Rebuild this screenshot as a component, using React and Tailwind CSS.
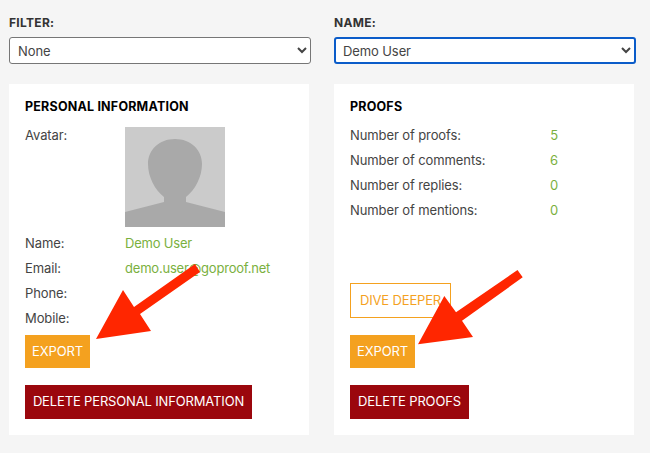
export default function App() {
  return (
    <div className="relative h-[453px] w-[650px] overflow-hidden bg-[#f5f5f5] font-['Inter','Liberation_Sans',sans-serif] text-[13px] tracking-[-0.1px] text-[#444444]">
      <div className="grid grid-cols-[300px_300px] gap-x-[25px] pl-[9px] pt-[15px]">
        <div className="flex flex-col">
          <label className="h-[22px] text-[12px] font-bold leading-[16px] tracking-[0.3px] text-[#333333]">FILTER:</label>
          <select defaultValue="None" className="h-[27px] w-[302px] rounded-[3px] border border-[#767676] bg-white pl-[4px] text-[13px] tracking-[-0.1px] text-[#444444]">
            <option>None</option>
          </select>
        </div>
        <div className="flex flex-col">
          <label className="h-[22px] text-[12px] font-bold leading-[16px] tracking-[0.3px] text-[#333333]">NAME:</label>
          <select defaultValue="Demo User" className="h-[27px] w-[302px] rounded-[3px] border-2 border-[#0b5cc9] bg-white pl-[3px] text-[13px] tracking-[-0.1px] text-[#444444] outline-none">
            <option>Demo User</option>
          </select>
        </div>

        <section className="mt-[20px] flex h-[351px] flex-col bg-white pl-4 pt-[15px]">
          <h2 className="h-[28px] text-[12.5px] font-bold leading-[16px] tracking-[0.2px] text-black">PERSONAL INFORMATION</h2>
          <div className="flex h-[100px]">
            <span className="w-[100px] leading-[16px]">Avatar:</span>
            <svg width="100" height="100" viewBox="0 0 100 100" className="block">
              <rect width="100" height="100" fill="#cbcbcb" />
              <path fill="#a9a9a9" d="M50 12C34 12 23 23 23 37C23 50 30 63 39 70V75L0 85V100H100V85L61 75V70C70 63 77 50 77 37C77 23 66 12 50 12Z" />
            </svg>
          </div>
          <div className="mt-[4px] flex flex-col">
            <div className="flex h-[25px] items-center"><span className="w-[100px]">Name:</span><span className="tracking-[-0.2px] text-[#7ab03e]">Demo User</span></div>
            <div className="flex h-[25px] items-center"><span className="w-[100px]">Email:</span><span className="tracking-[-0.2px] text-[#7ab03e]">demo.user@goproof.net</span></div>
            <div className="flex h-[25px] items-center"><span className="w-[100px]">Phone:</span></div>
            <div className="flex h-[25px] items-center"><span className="w-[100px]">Mobile:</span></div>
          </div>
          <button className="mt-[4px] h-[33px] w-[65px] bg-[#f4a11f] text-center text-[13px] tracking-[-0.15px] text-white">EXPORT</button>
          <button className="mt-[17px] h-[34px] w-[227px] bg-[#9b070d] text-center text-[13px] tracking-[-0.15px] text-white">DELETE PERSONAL INFORMATION</button>
        </section>

        <section className="mt-[20px] flex h-[351px] flex-col bg-white pl-4 pt-[15px]">
          <h2 className="h-[24px] text-[12.5px] font-bold leading-[16px] tracking-[0.2px] text-black">PROOFS</h2>
          <div className="flex h-[25px] items-center"><span className="w-[200px]">Number of proofs:</span><span className="w-[8px] text-right text-[#7ab03e]">5</span></div>
          <div className="flex h-[25px] items-center"><span className="w-[200px]">Number of comments:</span><span className="w-[8px] text-right text-[#7ab03e]">6</span></div>
          <div className="flex h-[25px] items-center"><span className="w-[200px]">Number of replies:</span><span className="w-[8px] text-right text-[#7ab03e]">0</span></div>
          <div className="flex h-[25px] items-center"><span className="w-[200px]">Number of mentions:</span><span className="w-[8px] text-right text-[#7ab03e]">0</span></div>
          <button className="mt-[60px] h-[35px] w-[101px] border border-[#f4a11f] bg-white text-center text-[13px] tracking-[-0.15px] text-[#f4a11f]">DIVE DEEPER</button>
          <button className="mt-[17px] h-[33px] w-[65px] bg-[#f4a11f] text-center text-[13px] tracking-[-0.15px] text-white">EXPORT</button>
          <button className="mt-[17px] h-[34px] w-[119px] bg-[#9b070d] text-center text-[13px] tracking-[-0.15px] text-white">DELETE PROOFS</button>
        </section>
      </div>

      <svg className="absolute left-0 top-0" width="650" height="453" viewBox="0 0 650 453">
        <polygon fill="#ff2600" points="195,264 200,272 140,314 151,331 96,339 123,290 134,307" />
        <polygon fill="#ff2600" points="517.5,270 522.7,277.3 462,320.7 473,337 418,344.3 444.3,296 456,312.3" />
      </svg>
    </div>
  );
}
